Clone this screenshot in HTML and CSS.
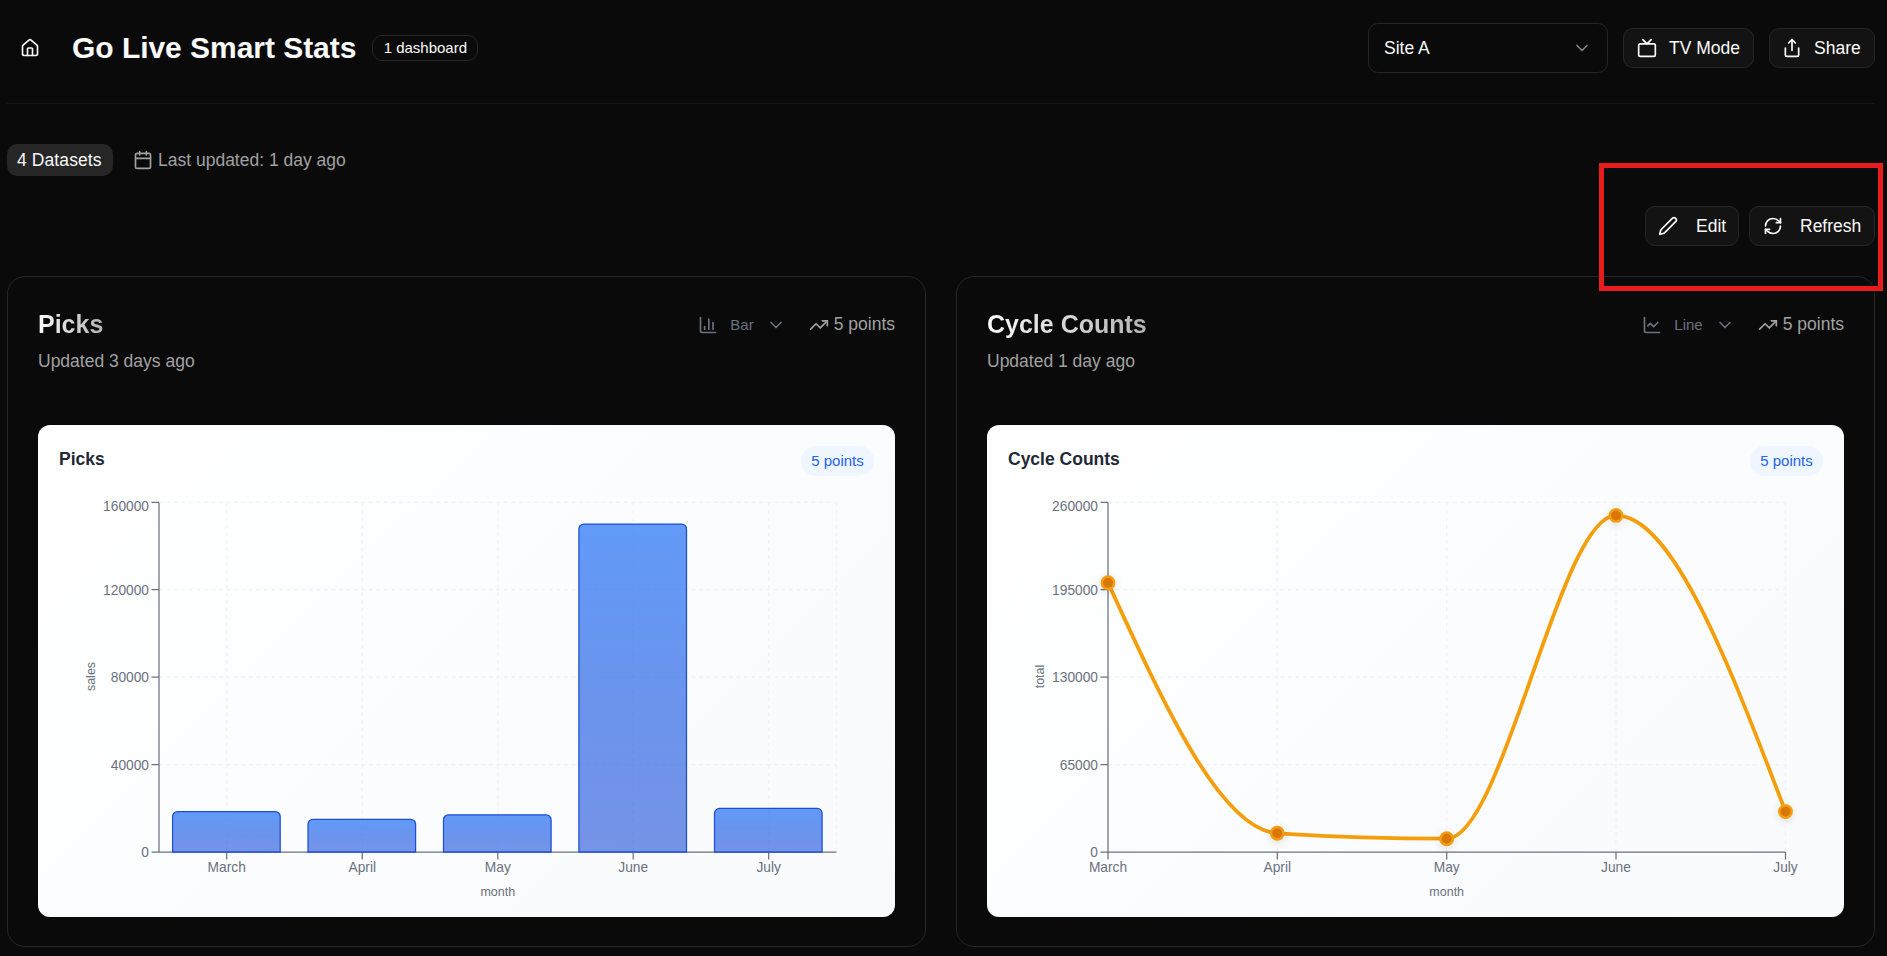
FILE: index.html
```html
<!DOCTYPE html>
<html lang="en">
<head>
<meta charset="utf-8">
<title>Go Live Smart Stats</title>
<link rel="stylesheet" href="styles.css">
</head>
<body>
<svg class="defs" width="0" height="0" aria-hidden="true">
  <defs>
    <linearGradient id="barFill" x1="0" y1="0" x2="0" y2="1">
      <stop offset="0" stop-color="#3b82f6" stop-opacity="0.8"/>
      <stop offset="1" stop-color="#1d4ed8" stop-opacity="0.6"/>
    </linearGradient>
    <symbol id="chevron" viewBox="0 0 24 24"><path d="m6 9 6 6 6-6"/></symbol>
    <symbol id="trend" viewBox="0 0 24 24"><path d="M16 7h6v6"/><path d="m22 7-8.5 8.5-5-5L2 17"/></symbol>
  </defs>
</svg>
<main class="page">
  <header class="topbar">
    <div class="brand">
      <svg class="icon" viewBox="0 0 24 24"><path d="M15 21v-8a1 1 0 0 0-1-1h-4a1 1 0 0 0-1 1v8"/><path d="M3 10a2 2 0 0 1 .709-1.528l7-5.999a2 2 0 0 1 2.582 0l7 5.999A2 2 0 0 1 21 10v9a2 2 0 0 1-2 2H5a2 2 0 0 1-2-2z"/></svg>
      <h1>Go Live Smart Stats</h1>
      <span class="count">1 dashboard</span>
    </div>
    <div class="tools">
      <div class="select"><span>Site A</span><svg class="icon chev"><use href="#chevron"/></svg></div>
      <button class="btn tv"><svg class="icon" viewBox="0 0 24 24"><rect width="20" height="15" x="2" y="7" rx="2"/><path d="m17 2-5 5-5-5"/></svg><span>TV Mode</span></button>
      <button class="btn share"><svg class="icon" viewBox="0 0 24 24"><path d="M12 2v13"/><path d="m16 6-4-4-4 4"/><path d="M4 12v8a2 2 0 0 0 2 2h12a2 2 0 0 0 2-2v-8"/></svg><span>Share</span></button>
    </div>
  </header>

  <div class="meta">
    <span class="datasets">4 Datasets</span>
    <span class="updated"><svg class="icon" viewBox="0 0 24 24"><path d="M8 2v4M16 2v4"/><rect width="18" height="18" x="3" y="4" rx="2"/><path d="M3 10h18"/></svg>Last updated: 1 day ago</span>
  </div>

  <div class="actions">
    <button class="btn edit"><svg class="icon" viewBox="0 0 24 24"><path d="M21.174 6.812a1 1 0 0 0-3.986-3.987L3.842 16.174a2 2 0 0 0-.5.83l-1.321 4.352a.5.5 0 0 0 .623.622l4.353-1.32a2 2 0 0 0 .83-.497z"/></svg><span>Edit</span></button>
    <button class="btn refresh"><svg class="icon" viewBox="0 0 24 24"><path d="M3 12a9 9 0 0 1 9-9 9.75 9.75 0 0 1 6.74 2.74L21 8"/><path d="M21 3v5h-5"/><path d="M21 12a9 9 0 0 1-9 9 9.75 9.75 0 0 1-6.74-2.74L3 16"/><path d="M8 16H3v5"/></svg><span>Refresh</span></button>
    <div class="highlight"></div>
  </div>

  <div class="cards">
    <section class="card">
      <div class="card-head">
        <div><h2>Picks</h2><p>Updated 3 days ago</p></div>
        <div class="card-tools">
          <span class="type"><svg class="icon" viewBox="0 0 24 24"><path d="M3 3v16a2 2 0 0 0 2 2h16"/><path d="M18 17V9M13 17V5M8 17v-3"/></svg><span>Bar</span><svg class="icon"><use href="#chevron"/></svg></span>
          <span class="points"><svg class="icon"><use href="#trend"/></svg>5 points</span>
        </div>
      </div>
      <div class="panel">
        <div class="panel-head"><h3>Picks</h3><span class="pill">5 points</span></div>
        <svg class="chart" viewBox="59 476 815 420">
          <g class="grid">
            <path d="M159 502.4H836.5M159 589.7H836.5M159 677.2H836.5M159 764.6H836.5"/>
            <path d="M226.7 502.4V852M362.3 502.4V852M497.8 502.4V852M633.2 502.4V852M768.7 502.4V852M836.5 502.4V852"/>
          </g>
          <g class="axis">
            <path d="M159 852H836.5M226.7 852v7.5M362.3 852v7.5M497.8 852v7.5M633.2 852v7.5M768.7 852v7.5"/>
            <path d="M159 502.4V852M151.5 502.4h7.5M151.5 589.7h7.5M151.5 677.2h7.5M151.5 764.6h7.5M151.5 852h7.5"/>
          </g>
          <g class="tick mid">
            <text x="226.7" y="872">March</text><text x="362.3" y="872">April</text><text x="497.8" y="872">May</text><text x="633.2" y="872">June</text><text x="768.7" y="872">July</text>
          </g>
          <g class="tick end">
            <text x="149" y="511">160000</text><text x="149" y="595">120000</text><text x="149" y="682">80000</text><text x="149" y="770">40000</text><text x="149" y="857">0</text>
          </g>
          <g class="bars">
            <path d="M172.6 852V816.5a5 5 0 0 1 5-5h97.6a5 5 0 0 1 5 5V852Z"/>
            <path d="M308 852V824.3a5 5 0 0 1 5-5h97.6a5 5 0 0 1 5 5V852Z"/>
            <path d="M443.5 852V819.8a5 5 0 0 1 5-5h97.6a5 5 0 0 1 5 5V852Z"/>
            <path d="M578.9 852V529a5 5 0 0 1 5-5h97.6a5 5 0 0 1 5 5V852Z"/>
            <path d="M714.5 852V813.4a5 5 0 0 1 5-5h97.6a5 5 0 0 1 5 5V852Z"/>
          </g>
          <g class="label">
            <text x="497.8" y="895.5">month</text>
            <text transform="translate(95 676.5) rotate(-90)">sales</text>
          </g>
        </svg>
      </div>
    </section>

    <section class="card">
      <div class="card-head">
        <div><h2>Cycle Counts</h2><p>Updated 1 day ago</p></div>
        <div class="card-tools">
          <span class="type"><svg class="icon" viewBox="0 0 24 24"><path d="M3 3v16a2 2 0 0 0 2 2h16"/><path d="m19 9-5 5-4-4-3 3"/></svg><span>Line</span><svg class="icon"><use href="#chevron"/></svg></span>
          <span class="points"><svg class="icon"><use href="#trend"/></svg>5 points</span>
        </div>
      </div>
      <div class="panel">
        <div class="panel-head"><h3>Cycle Counts</h3><span class="pill">5 points</span></div>
        <svg class="chart" viewBox="1008 476 815 420">
          <g class="grid">
            <path d="M1108 502.4H1785.5M1108 589.7H1785.5M1108 677.2H1785.5M1108 764.6H1785.5"/>
            <path d="M1277.3 502.4V852M1446.7 502.4V852M1616 502.4V852M1785.5 502.4V852"/>
          </g>
          <g class="axis">
            <path d="M1108 852H1785.5M1108 852v7.5M1277.3 852v7.5M1446.7 852v7.5M1616 852v7.5M1785.5 852v7.5"/>
            <path d="M1108 502.4V852M1100.5 502.4h7.5M1100.5 589.7h7.5M1100.5 677.2h7.5M1100.5 764.6h7.5M1100.5 852h7.5"/>
          </g>
          <g class="tick mid">
            <text x="1108" y="872">March</text><text x="1277.3" y="872">April</text><text x="1446.7" y="872">May</text><text x="1616" y="872">June</text><text x="1785.5" y="872">July</text>
          </g>
          <g class="tick end">
            <text x="1098" y="511">260000</text><text x="1098" y="595">195000</text><text x="1098" y="682">130000</text><text x="1098" y="770">65000</text><text x="1098" y="857">0</text>
          </g>
          <path class="line" d="M1108 582.7C1164.5 706.2 1220.9 829.7 1277.3 833.3C1333.8 836.9 1390.2 838.7 1446.7 838.7C1503.1 838.7 1559.6 515.4 1616 515.4C1672.5 515.4 1729 663.5 1785.5 811.6"/>
          <g class="dots">
            <circle cx="1108" cy="582.7" r="6.2"/><circle cx="1277.3" cy="833.3" r="6.2"/><circle cx="1446.7" cy="838.7" r="6.2"/><circle cx="1616" cy="515.4" r="6.2"/><circle cx="1785.5" cy="811.6" r="6.2"/>
          </g>
          <g class="label">
            <text x="1446.7" y="895.5">month</text>
            <text transform="translate(1044 676.5) rotate(-90)">total</text>
          </g>
        </svg>
      </div>
    </section>
  </div>
</main>
</body>
</html>
```
FILE: styles.css
```css
* { box-sizing: border-box; }
html, body { height: 100%; }
body {
  margin: 0;
  overflow: hidden;
  background: #0a0a0a;
  color: #fafafa;
  font-family: "Liberation Sans", Arial, sans-serif;
  font-size: 17.5px;
  line-height: 25px;
}
h1, h2, h3, p { margin: 0; }
.defs { position: absolute; }
.page { padding: 0 12px 0 7px; }
.icon {
  width: 20px;
  height: 20px;
  flex: none;
  fill: none;
  stroke: currentColor;
  stroke-width: 2;
  stroke-linecap: round;
  stroke-linejoin: round;
}

.topbar {
  display: flex;
  justify-content: space-between;
  align-items: center;
  height: 104px;
  padding: 23px 0 30px;
  border-bottom: 1px solid #171717;
}
.brand { display: flex; align-items: center; padding-left: 13px; }
h1 { margin-left: 32px; font-size: 30px; line-height: 40px; font-weight: 700; letter-spacing: -0.04px; }
.count {
  display: flex;
  align-items: center;
  justify-content: center;
  width: 106px;
  height: 26px;
  margin: 0 0 0 16px;
  border: 1px solid #262626;
  border-radius: 10px;
  font-size: 15px;
  line-height: 20px;
}
.tools { display: flex; align-items: center; gap: 15px; }
.select {
  display: flex;
  align-items: center;
  justify-content: space-between;
  width: 240px;
  height: 50px;
  padding: 0 15px;
  border: 1px solid #262626;
  border-radius: 10px;
}
.chev { color: #858585; }
.btn {
  display: flex;
  align-items: center;
  height: 40px;
  padding: 0 0 0 13px;
  border: 1px solid #262626;
  border-radius: 10px;
  background: #131313;
  color: #fafafa;
  font: inherit;
}
.tv { width: 131px; gap: 12px; }
.share { width: 106px; padding-left: 12px; gap: 12px; }
.edit { width: 94px; padding-left: 12px; gap: 18px; }
.refresh { width: 126px; gap: 17px; }

.meta { display: flex; align-items: center; gap: 20px; height: 32px; margin-top: 40px; }
.datasets {
  display: flex;
  align-items: center;
  width: 106px;
  height: 32px;
  padding-left: 10px;
  border-radius: 10px;
  background: #262626;
  letter-spacing: 0.1px;
}
.updated { display: flex; align-items: center; gap: 5px; color: #a1a1a1; }

.actions { position: relative; display: flex; justify-content: flex-end; gap: 10px; margin-top: 30px; }
.highlight {
  position: absolute;
  z-index: 2;
  top: -43px;
  right: -8px;
  width: 284px;
  height: 128px;
  border: 5px solid #e81c1c;
}

.cards { display: grid; grid-template-columns: 1fr 1fr; gap: 30px; margin-top: 30px; }
.card { height: 671px; padding: 30px; border: 1px solid #262626; border-radius: 18px; }
.card-head { display: flex; justify-content: space-between; align-items: flex-start; height: 118px; }
h2 {
  width: max-content;
  font-size: 25px;
  line-height: 35px;
  background: linear-gradient(90deg, #fafafa, #b3b3b3);
  background-clip: text;
  -webkit-background-clip: text;
  color: transparent;
}
.card-head p { margin-top: 7px; color: #a1a1a1; }
.card-tools { display: flex; align-items: center; gap: 23px; height: 35px; color: #a1a1a1; }
.type { display: flex; align-items: center; gap: 12px; font-size: 15px; color: #6b7280; }
.points { display: flex; align-items: center; gap: 5px; }
.panel {
  height: 492px;
  padding: 21px;
  border-radius: 12px;
  background: linear-gradient(135deg, #ffffff, #f8fafc);
}
.panel-head { display: flex; justify-content: space-between; height: 30px; }
h3 { font-size: 17.5px; line-height: 27px; color: #1f2937; }
.pill {
  height: 30px;
  width: 73px;
  border-radius: 15px;
  background: #eff6ff;
  color: #2563eb;
  font-size: 15px;
  line-height: 30px;
  text-align: center;
}

.chart { display: block; width: 815px; height: 420px; overflow: visible; }
.grid { fill: none; stroke: #f0f2f4; stroke-width: 1.25; stroke-dasharray: 3.75 3.75; }
.axis { fill: none; stroke: #6b7280; stroke-width: 1.25; }
.tick { font-size: 13.75px; fill: #6b7280; }
.label { font-size: 12.5px; fill: #6b7280; text-anchor: middle; }
.mid { text-anchor: middle; }
.end { text-anchor: end; }
.bars { fill: url(#barFill); stroke: #1d4ed8; stroke-width: 1.25; }
.line { fill: none; stroke: #f59e0b; stroke-width: 3.75; }
.dots { fill: #d97706; stroke: #f59e0b; stroke-width: 2.5; filter: drop-shadow(0 2.5px 4px rgba(0, 0, 0, 0.12)); }
```
